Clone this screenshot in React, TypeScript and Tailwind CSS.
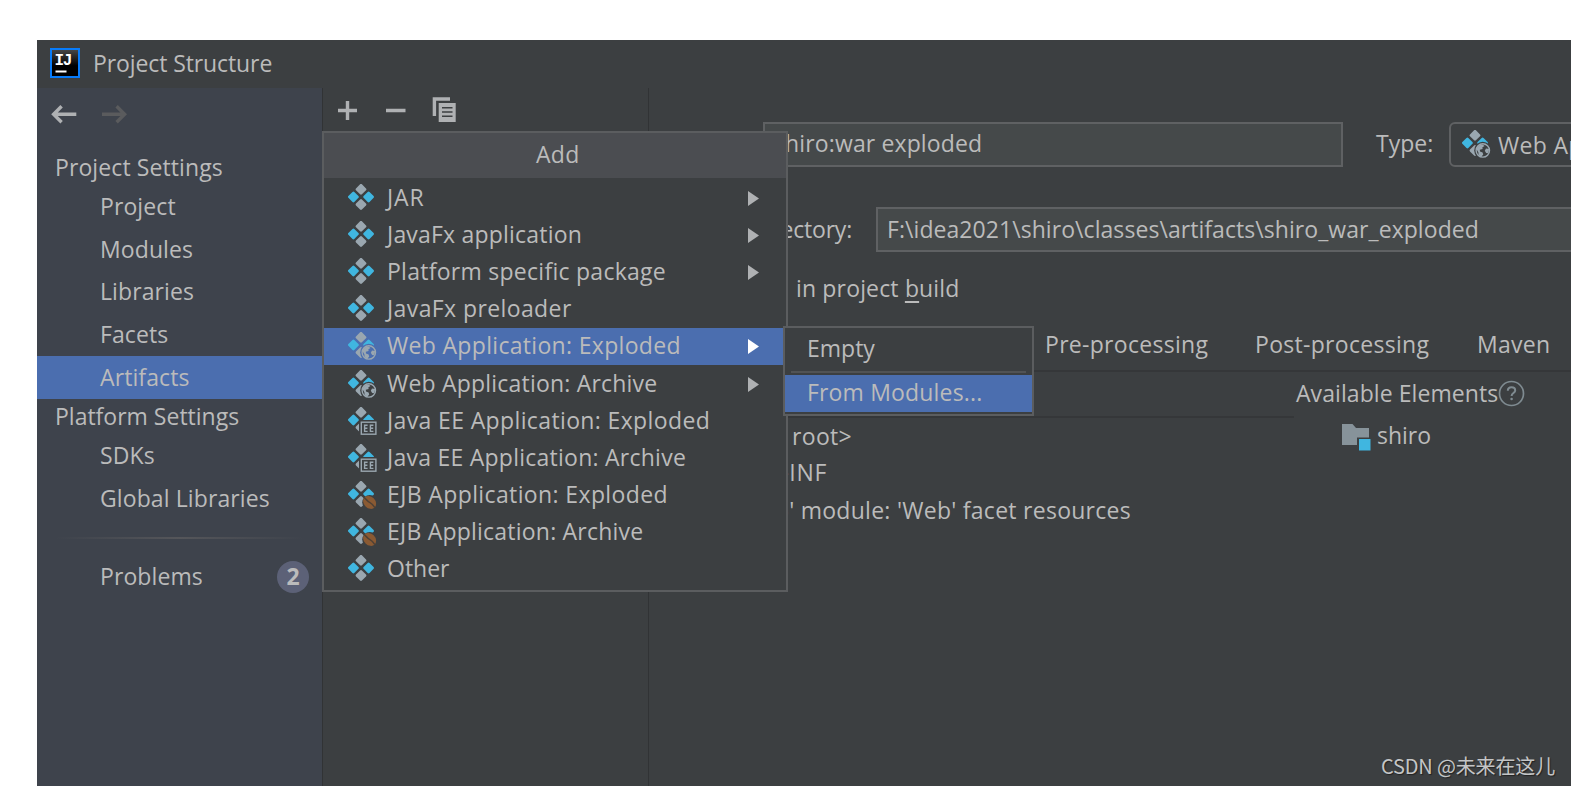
import { ReactNode } from "react";

type Badge = "web" | "ee" | "ejb";

const ArtifactIcon = ({ badge }: { badge?: Badge }) => {
  const mask = badge ? `url(#cut-${badge})` : undefined;
  return (
    <svg className="block shrink-0" width="29" height="29" viewBox="0 0 29 29" fill="none">
      <defs>
        <mask id="cut-web">
          <rect width="29" height="29" fill="#fff" />
          <circle cx="20.8" cy="20.4" r="8.6" fill="#000" />
        </mask>
        <mask id="cut-ee">
          <rect width="29" height="29" fill="#fff" />
          <rect x="11" y="13" width="18" height="16" fill="#000" />
        </mask>
        <mask id="cut-ejb">
          <rect width="29" height="29" fill="#fff" />
          <circle cx="21.8" cy="21.6" r="7.6" fill="#000" />
        </mask>
      </defs>
      <g mask={mask} strokeWidth="2.6" strokeLinejoin="round">
        <path d="M13 1.2 17.1 5.3 13 9.4 8.900 5.300Z" fill="#9aa7b0" stroke="#9aa7b0" />
        <path d="M13 16.4 17.1 20.5 13 24.6 8.9 20.5Z" fill="#9aa7b0" stroke="#9aa7b0" />
        <path d="M5.4 8.8 9.5 12.9 5.4 17 1.3 12.9Z" fill="#40b6e0" stroke="#40b6e0" />
        <path d="M20.6 8.8 24.7 12.9 20.6 17 16.5 12.9Z" fill="#40b6e0" stroke="#40b6e0" />
      </g>
      {badge === "web" && (
        <g>
          <circle cx="20.8" cy="20.4" r="6.7" stroke="#9aa7b0" strokeWidth="1.4" />
          <path d="M14.2 18.5 17 15.2 20.5 14.4 22.6 16 20.4 17.3 20.6 19 17.8 19.8 18 21.6 20.6 22.4 21.2 24.6 19.4 26.8 16.6 25.2 16.4 22.6Z" fill="#9aa7b0" />
          <path d="M27.2 19 24 18.6 22.8 20.8 24.2 23 26.2 23.2Z" fill="#9aa7b0" />
        </g>
      )}
      {badge === "ee" && (
        <g stroke="#9aa7b0" strokeWidth="1.4">
          <rect x="13.3" y="15.2" width="14.6" height="12" />
          <path d="M19.6 18.3H16.6V24.4H19.6M16.6 21.3H19.4M25.4 18.3H22.4V24.4H25.4M22.4 21.3H25.2" />
        </g>
      )}
      {badge === "ejb" && (
        <g>
          <ellipse cx="21.6" cy="21.4" rx="7.2" ry="5.7" transform="rotate(45 21.6 21.4)" fill="#8a5a33" />
          <path d="M16 16.4C19 19 19.8 20.6 21.6 21.4 23.6 22.4 25 24 27 26.8" stroke="#4f4136" strokeWidth="1.5" />
        </g>
      )}
    </svg>
  );
};

const SubmenuArrow = ({ active }: { active?: boolean }) => (
  <svg className="block" width="11" height="15" viewBox="0 0 11 15">
    <path d="M0 0 11 7.5 0 15Z" fill={active ? "#ffffff" : "#afb1b3"} />
  </svg>
);

type MenuItem = { label: string; badge?: Badge; submenu?: boolean; active?: boolean; spacing: string };

const menuItems: MenuItem[] = [
  { label: "JAR", submenu: true, spacing: "tracking-[0.9px]" },
  { label: "JavaFx application", submenu: true, spacing: "tracking-[0.2px]" },
  { label: "Platform specific package", submenu: true, spacing: "tracking-[0.27px]" },
  { label: "JavaFx preloader", spacing: "tracking-[0.4px]" },
  { label: "Web Application: Exploded", badge: "web", submenu: true, active: true, spacing: "tracking-[0.32px]" },
  { label: "Web Application: Archive", badge: "web", submenu: true, spacing: "tracking-[0.2px]" },
  { label: "Java EE Application: Exploded", badge: "ee", spacing: "tracking-[0.37px]" },
  { label: "Java EE Application: Archive", badge: "ee", spacing: "tracking-[0.25px]" },
  { label: "EJB Application: Exploded", badge: "ejb", spacing: "tracking-[0.38px]" },
  { label: "EJB Application: Archive", badge: "ejb", spacing: "tracking-[0.22px]" },
  { label: "Other", spacing: "tracking-normal" },
];

const AddMenu = () => (
  <div className="absolute left-[284.5px] top-[91px] h-[461px] w-[466.5px] border-2 border-[#5b5d5f] bg-[#3c3f41]">
    <div className="flex h-[45px] items-center justify-center bg-[#4b4d51] pb-[3px] pl-[6px] tracking-[0.3px]">Add</div>
    <div className="pt-[1.5px]">
      {menuItems.map((item) => (
        <div key={item.label} className={`flex h-[37.2px] items-center pl-[24.5px] pr-[27px] ${item.active ? "bg-[#4b6eaf]" : ""}`}>
          <ArtifactIcon badge={item.badge} />
          <span className={`ml-[10px] flex-1 pb-[2px] ${item.spacing}`}>{item.label}</span>
          {item.submenu && <SubmenuArrow active={item.active} />}
        </div>
      ))}
    </div>
  </div>
);

const FacetSubmenu = () => (
  <div className="absolute left-[746px] top-[286px] h-[90px] w-[251px] border-2 border-[#5b5d5f] bg-[#3c3f41]">
    <div className="flex h-[43px] items-center pb-[2px] pl-[22px]">Empty</div>
    <div className="mx-[6px] h-[2px] bg-[#515355]" />
    <div className="mt-[2px] flex h-[37px] items-center bg-[#4b6eaf] pb-[2px] pl-[22px] tracking-[0.17px]">From Modules...</div>
  </div>
);

const SidebarItem = ({ children, active }: { children: ReactNode; active?: boolean }) => (
  <div className={`flex h-[42.8px] items-center pl-[63px] tracking-[0.1px] ${active ? "bg-[#4b6eaf]" : ""}`}>{children}</div>
);

const Sidebar = () => (
  <div className="w-[285px] shrink-0 bg-[#3e434c]">
    <svg className="block" width="285" height="60" viewBox="0 0 285 60" fill="none" strokeWidth="3.4">
      <path d="M39.3 26.2H17M24.6 18.2 16.6 26.2 24.6 34.2" stroke="#afb1b3" />
      <path d="M65 26.2H87.5M79.6 18.2 87.6 26.2 79.6 34.2" stroke="#5a5b5d" />
    </svg>
    <div className="flex h-[37px] items-center pl-[18px] pt-[2px] tracking-[0.1px]">Project Settings</div>
    <SidebarItem>Project</SidebarItem>
    <SidebarItem>Modules</SidebarItem>
    <SidebarItem>Libraries</SidebarItem>
    <SidebarItem>Facets</SidebarItem>
    <SidebarItem active>Artifacts</SidebarItem>
    <div className="flex h-[35.5px] items-center pl-[18px]">Platform Settings</div>
    <SidebarItem>SDKs</SidebarItem>
    <SidebarItem>Global Libraries</SidebarItem>
    <div className="mx-[18px] mb-[17px] mt-[17px] h-[1.5px] bg-linear-to-r from-transparent via-[#55565a] to-transparent" />
    <div className="flex h-[42.8px] items-center justify-between pl-[63px] pr-[13px] tracking-[0.1px]">
      <span>Problems</span>
      <span className="flex size-8 items-center justify-center rounded-full bg-[#5c6177] font-bold tracking-normal">2</span>
    </div>
  </div>
);

const Toolbar = () => (
  <svg className="block" width="325" height="43" viewBox="0 0 325 43" fill="none">
    <path d="M15 22.5H34M24.5 13V32M63 22.5H82.5" stroke="#afb1b3" strokeWidth="3.4" />
    <path d="M127 11H111.4V28" stroke="#afb1b3" strokeWidth="3.4" />
    <path d="M115.7 15H132.7V34H115.7Z" fill="#afb1b3" />
    <path d="M119 19.8H129.500M119 24H129.500M119 28.200H129.500" stroke="#3c3f41" strokeWidth="1.6" />
  </svg>
);

const ArtifactEditor = () => (
  <div className="min-w-0 flex-1 overflow-hidden">
    <div className="flex pl-[114px] pt-[33.5px]">
      <div className="flex h-[45px] w-[580px] shrink-0 items-center border-2 border-[#5f6163] bg-[#45494a] pb-[1px] pl-[9px] tracking-[0.13px]">
        shiro:war exploded
      </div>
      <div className="flex h-[45px] w-[106px] shrink-0 items-center pb-[1px] pl-[33px]">Type:</div>
      <div className="flex h-[45px] w-[300px] shrink-0 items-center rounded-md border-2 border-[#5f6163] pl-[11px]">
        <ArtifactIcon badge="web" />
        <span className="ml-[7px] whitespace-nowrap pt-[2px] tracking-[0.32px]">Web Application: Exploded</span>
      </div>
    </div>
    <div className="mt-[40.5px] flex">
      <div className="flex h-[45px] w-[203px] shrink-0 items-center justify-end pb-[1px] tracking-[-0.2px]">Output directory:</div>
      <div className="ml-[24px] flex h-[45px] flex-1 items-center border-y-2 border-l-2 border-[#5f6163] bg-[#45494a] pb-[1px] pl-[9px] tracking-[0.06px]">
        F:\idea2021\shiro\classes\artifacts\shiro_war_exploded
      </div>
    </div>
    <div className="mt-[17px] flex h-[38px] items-center pl-[147px] tracking-[0.16px]">
      <span>
        in project <span className="underline decoration-[1.5px] underline-offset-4">b</span>uild
      </span>
    </div>
    <div className="mt-[18.5px] flex h-[46px] border-b-2 border-[#353739] pl-[396px] leading-[37px] tracking-[0.3px]">
      <span className="w-[210px]">Pre-processing</span>
      <span className="w-[222px]">Post-processing</span>
      <span>Maven</span>
    </div>
    <div className="flex">
      <div className="w-[645px] shrink-0">
        <div className="h-[46px] border-b-2 border-[#353739]" />
        <div className="flex h-[37.2px] w-[203px] items-center justify-end tracking-[0.3px]">&lt;output root&gt;</div>
        <div className="flex h-[37.2px] w-[178px] items-center justify-end pb-[1px] tracking-[0.7px]">WEB-INF</div>
        <div className="flex h-[37.2px] w-[482px] items-center justify-end whitespace-nowrap tracking-[0.27px]">
          'shiro' module: 'Web' facet resources
        </div>
      </div>
      <div className="pt-[3px]">
        <div className="flex h-[38px] items-center whitespace-nowrap pl-[2px]">
          <span className="pb-[1px] tracking-[0.07px]">Available Elements</span>
          <svg className="block" width="27" height="27" viewBox="0 0 27 27" fill="none">
            <circle cx="13.5" cy="13.5" r="12" stroke="#7f8b91" strokeWidth="1.7" />
            <path d="M9.8 10.8C9.8 8.6 11.4 7.3 13.5 7.3S17.2 8.6 17.2 10.5C17.2 12.9 13.6 13.2 13.6 15.9" stroke="#7f8b91" strokeWidth="2" />
            <circle cx="13.6" cy="19" r="1.3" fill="#7f8b91" />
          </svg>
        </div>
        <div className="mt-[6px] flex h-[38px] items-center pl-[47px]">
          <svg className="block" width="30" height="27" viewBox="0 0 30 27">
            <path d="M1 0H11.500L15 4H28V13.500H16V21H1Z" fill="#87939a" />
            <path d="M18 15H29.500V26.500H18Z" fill="#40b6e0" />
          </svg>
          <span className="ml-[6px] pb-[4px]">shiro</span>
        </div>
      </div>
    </div>
  </div>
);

export default function App() {
  return (
    <div className="h-[786px] w-[1571px] overflow-hidden bg-white pl-[37px] pt-10 font-['Open_Sans','Noto_Sans','Noto_Sans_CJK_SC',sans-serif] text-[23px] leading-none text-[#bbbbbb]">
      <div className="relative flex h-[746px] flex-col bg-[#3c3f41]">
        <div className="flex h-12 shrink-0 items-center pb-[3px] pl-[13px]">
          <svg className="block" width="30" height="30" viewBox="0 0 30 30">
            <defs>
              <linearGradient id="logo" x1="0" y1="0" x2="0" y2="1">
                <stop offset="0" stopColor="#4a4a4a" />
                <stop offset="0.6" stopColor="#000000" />
              </linearGradient>
            </defs>
            <rect x="1" y="1" width="28" height="28" fill="url(#logo)" stroke="#087cfa" strokeWidth="2" />
            <text x="4.5" y="17" fill="#ffffff" fontFamily="Liberation Mono" fontWeight="700" fontSize="16" letterSpacing="-1.3">IJ</text>
            <rect x="5.5" y="22.5" width="11" height="2" fill="#ffffff" />
          </svg>
          <span className="ml-[13px] pt-[2px] tracking-[-0.1px]">Project Structure</span>
        </div>
        <div className="flex min-h-0 flex-1">
          <Sidebar />
          <div className="w-[327px] shrink-0 border-x border-[#313335]">
            <Toolbar />
          </div>
          <ArtifactEditor />
        </div>
        <AddMenu />
        <FacetSubmenu />
        <div className="absolute bottom-[8px] right-[16px] font-['Noto_Sans_CJK_SC',sans-serif] text-[20px] leading-6 tracking-[-0.15px] text-[#c4c5c6] [text-shadow:1px_1px_1px_#222]">
          CSDN @未来在这儿
        </div>
      </div>
    </div>
  );
}
